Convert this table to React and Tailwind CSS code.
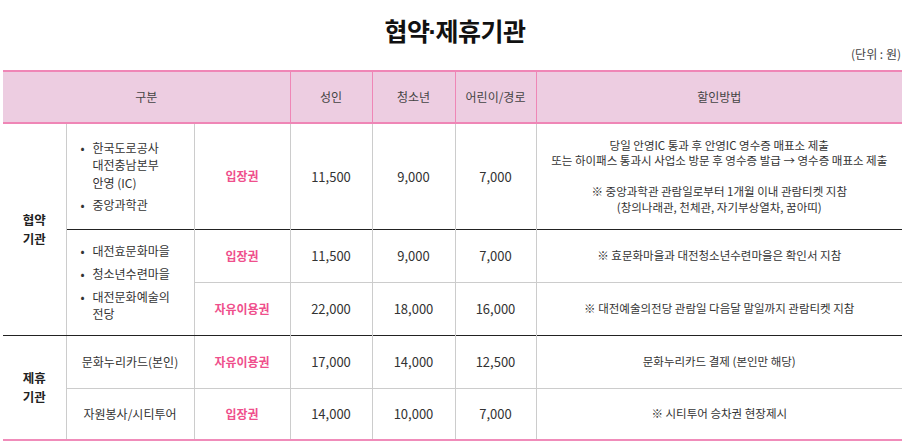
const PINK = 'text-[#ef4f8c] font-bold';

const Bullets = ({ items }) => (
  <ul className="flex flex-col gap-[5px] pl-[14px] text-left">
    {items.map((lines, i) => (
      <li key={i} className="flex">
        <span className="w-[12px] shrink-0">•</span>
        <span className="leading-[17.5px]">
          {lines.map((l, j) => (
            <span key={j} className="block">{l}</span>
          ))}
        </span>
      </li>
    ))}
  </ul>
);

export default function App() {
  const gray = 'border-[#cccccc]';
  return (
    <div
      className="w-[910px] h-[445px] bg-white text-[#333]"
      style={{ fontFamily: '"Noto Sans CJK KR", "Noto Sans", sans-serif' }}
    >
      <h1 className="pt-[16px] text-center text-[25px] leading-[28px] font-bold text-[#111] tracking-[-0.5px]">
        협약<span className="font-['Liberation_Sans'] mx-[-1px]">·</span>제휴기관
      </h1>
      <p className="text-right pr-[9px] text-[12px] leading-[16px] mb-[8px] text-[#444]">(단위 : 원)</p>

      <table className="ml-[3px] w-[899px] table-fixed border-collapse text-center">
        <colgroup>
          <col className="w-[63px]" />
          <col className="w-[128px]" />
          <col className="w-[96px]" />
          <col className="w-[82px]" />
          <col className="w-[83px]" />
          <col className="w-[81px]" />
          <col className="w-[366px]" />
        </colgroup>
        <thead>
          <tr className="h-[52px] bg-[#edcde1] text-[12px] text-[#444] border-t-2 border-b-2 border-[#ef86b6]">
            <th colSpan={3} className="font-normal border-r border-[#ef86b6]">구분</th>
            <th className="font-normal border-r border-[#ef86b6]">성인</th>
            <th className="font-normal border-r border-[#ef86b6]">청소년</th>
            <th className="font-normal border-r border-[#ef86b6]">어린이/경로</th>
            <th className="font-normal">할인방법</th>
          </tr>
        </thead>
        <tbody className="text-[13px]">
          <tr className="h-[106px] border-b border-[#222]">
            <td rowSpan={3} className={`border-r ${gray} border-b border-b-[#222] text-[12.5px] font-bold leading-[19px] text-[#222]`}>
              협약<br />기관
            </td>
            <td className={`border-r ${gray} text-[12px]`}>
              <Bullets items={[['한국도로공사', '대전충남본부', '안영 (IC)'], ['중앙과학관']]} />
            </td>
            <td className={`border-r ${gray} text-[12px] ${PINK}`}>입장권</td>
            <td className={`border-r ${gray}`}>11,500</td>
            <td className={`border-r ${gray}`}>9,000</td>
            <td className={`border-r ${gray}`}>7,000</td>
            <td className="text-[11.5px] leading-[15.5px]">
              당일 안영IC 통과 후 안영IC 영수증 매표소 제출<br />
              또는 하이패스 통과시 사업소 방문 후 영수증 발급 → 영수증 매표소 제출<br />
              <br />
              ※ 중앙과학관 관람일로부터 1개월 이내 관람티켓 지참<br />
              (창의나래관, 천체관, 자기부상열차, 꿈아띠)
            </td>
          </tr>
          <tr className={`h-[53px] border-b ${gray}`}>
            <td rowSpan={2} className={`border-r ${gray} border-b border-b-[#222] text-[12px]`}>
              <Bullets items={[['대전효문화마을'], ['청소년수련마을'], ['대전문화예술의', '전당']]} />
            </td>
            <td className={`border-r ${gray} text-[12px] ${PINK}`}>입장권</td>
            <td className={`border-r ${gray}`}>11,500</td>
            <td className={`border-r ${gray}`}>9,000</td>
            <td className={`border-r ${gray}`}>7,000</td>
            <td className="text-[11.5px]">※ 효문화마을과 대전청소년수련마을은 확인서 지참</td>
          </tr>
          <tr className="h-[53px] border-b border-[#222]">
            <td className={`border-r ${gray} text-[12px] ${PINK}`}>자유이용권</td>
            <td className={`border-r ${gray}`}>22,000</td>
            <td className={`border-r ${gray}`}>18,000</td>
            <td className={`border-r ${gray}`}>16,000</td>
            <td className="text-[11.5px]">※ 대전예술의전당 관람일 다음달 말일까지 관람티켓 지참</td>
          </tr>
          <tr className={`h-[53px] border-b ${gray}`}>
            <td rowSpan={2} className={`border-r ${gray} border-b-2 border-b-[#f08cba] text-[12.5px] font-bold leading-[19px] text-[#222]`}>
              제휴<br />기관
            </td>
            <td className={`border-r ${gray} text-[12px]`}>문화누리카드(본인)</td>
            <td className={`border-r ${gray} text-[12px] ${PINK}`}>자유이용권</td>
            <td className={`border-r ${gray}`}>17,000</td>
            <td className={`border-r ${gray}`}>14,000</td>
            <td className={`border-r ${gray}`}>12,500</td>
            <td className="text-[11.5px]">문화누리카드 결제 (본인만 해당)</td>
          </tr>
          <tr className="h-[52px] border-b-2 border-[#f08cba]">
            <td className={`border-r ${gray} text-[12px]`}>자원봉사/시티투어</td>
            <td className={`border-r ${gray} text-[12px] ${PINK}`}>입장권</td>
            <td className={`border-r ${gray}`}>14,000</td>
            <td className={`border-r ${gray}`}>10,000</td>
            <td className={`border-r ${gray}`}>7,000</td>
            <td className="text-[11.5px]">※ 시티투어 승차권 현장제시</td>
          </tr>
        </tbody>
      </table>
    </div>
  );
}
